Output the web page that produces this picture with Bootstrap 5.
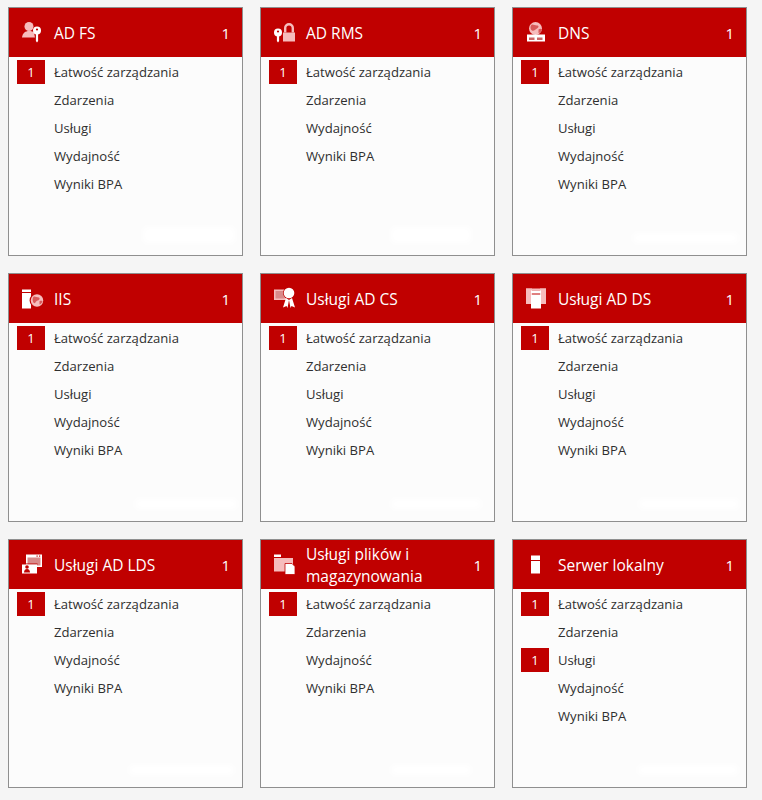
<!DOCTYPE html>
<html lang="pl">
<head>
<meta charset="utf-8">
<title>Pulpit nawigacyjny</title>
<link href="https://cdn.jsdelivr.net/npm/bootstrap@5.3.0/dist/css/bootstrap.min.css" rel="stylesheet">
<style>
html,body{background:#f5f5f5;}
body{font-family:"Open Sans","Noto Sans",sans-serif;color:#2f2f2f;margin:0;height:800px;overflow:hidden;}
.tile-grid{display:grid;grid-template-columns:repeat(3,235px);grid-auto-rows:249px;column-gap:17px;row-gap:17px;padding:7px 0 0 8px;}
.tile{background:#fcfcfc;border:1px solid #8f8f8f;position:relative;overflow:hidden;}
.tile-head{background:#c00000;color:#fff;height:49px;font-size:15.5px;line-height:22px;padding:0 12px 0 0;}
.tile-ico{width:45px;flex:none;display:flex;justify-content:center;padding-left:1px;}
.tile-ico svg{display:block;width:24px;height:24px;}
.tile-name{flex:1;min-width:0;}
.tile-num{font-size:15px;padding-left:8px;}
.tile-rows{padding-top:3px;}
.tile-row{height:28px;font-size:13.1px;line-height:24px;}
.tile-flag{width:28px;height:24px;margin-left:8px;margin-right:9px;flex:none;text-align:center;color:#fff;font-size:13px;}
.tile-flag.on{background:#c00000;}
.tile-glow{position:absolute;background:#fff;filter:blur(3px);height:16px;bottom:12px;}
</style>
</head>
<body>
<svg width="0" height="0" class="position-absolute">
<defs>
<symbol id="i-adfs" viewBox="0 0 24 24"><circle cx="9" cy="5.500" r="4.500" fill="#f6bcbc"/><path d="M2 16.500c.5-4.500 3.500-6.500 7-6.500 2.500 0 4 .5 5 1.500l1 5z" fill="#f6bcbc"/><circle cx="17" cy="9.500" r="4" fill="#fff"/><circle cx="17" cy="8.500" r="1.100" fill="#c00000"/><path d="M15.900 12.500h2.200v7.500l-1.100 1.500-1.100-1.500z" fill="#fff"/></symbol>
<symbol id="i-adrms" viewBox="0 0 24 24"><path d="M12 11.500V7a5 5 0 0 1 10 0v4.500h-2.400V7a2.600 2.600 0 0 0-5.200 0v4.500z" fill="#f6bcbc"/><rect x="11" y="11.500" width="12" height="9" fill="#f6bcbc"/><circle cx="6" cy="11.500" r="4.600" fill="#c00000"/><circle cx="6" cy="11.500" r="4" fill="#fff"/><circle cx="6" cy="10.500" r="1.100" fill="#c00000"/><path d="M4.900 14.500h2.200v5.500l-1.100 1.500-1.100-1.500z" fill="#fff"/></symbol>
<symbol id="i-dns" viewBox="0 0 24 24"><circle cx="11.500" cy="7.500" r="6.500" fill="#f6bcbc"/><path d="M8 3.500c2 0 3 1 5 1s2 2 0 3-3 3-5 2-2-5 0-6zM14.500 8.500c1-1 3-1 3.500 0-.5 2-2 3.500-3.500 3.500z" fill="#d85a5a"/><rect x="3" y="13.500" width="18" height="7" fill="#fff"/><rect x="5" y="16.500" width="5.500" height="2.500" fill="#c66"/><rect x="13" y="16.500" width="5.500" height="2.500" fill="#c66"/></symbol>
<symbol id="i-iis" viewBox="0 0 24 24"><rect x="2" y="2.500" width="9" height="2.500" fill="#fff"/><rect x="2" y="6" width="9" height="15.500" fill="#fff"/><circle cx="17" cy="13.500" r="7.400" fill="#c00000"/><circle cx="17" cy="13.500" r="6.200" fill="#f6bcbc"/><path d="M14 9.500c2 0 3 1 5 1 1.500 1 0 3-1.500 3s-2 3.500-3.500 2.500-2-5.500 0-6.500zM19.500 14c1-.5 2.500-.5 3 0-.5 2-2 3.500-3 3.500z" fill="#d85a5a"/></symbol>
<symbol id="i-cs" viewBox="0 0 24 24"><rect x="2" y="2.500" width="12" height="10.500" fill="#f6bcbc"/><rect x="3.500" y="4" width="9" height="7.500" fill="#d98a8a"/><circle cx="17" cy="6" r="6" fill="#c00000"/><circle cx="17" cy="6" r="5.300" fill="#fff"/><path d="M14 11l-3 9.500 3.500-1.500 1 2 1.500-8zM20 11l3 9.500-3.500-1.500-1 2-1.500-8z" fill="#fff"/></symbol>
<symbol id="i-ds" viewBox="0 0 24 24"><rect x="2" y="1.500" width="6" height="15.500" fill="#f6bcbc"/><rect x="16" y="1.500" width="6" height="15.500" fill="#f6bcbc"/><rect x="2" y="1.500" width="20" height="2" fill="#f6bcbc"/><rect x="7" y="3.500" width="10" height="3" fill="#fff"/><rect x="7" y="7.500" width="10" height="14" fill="#fff"/></symbol>
<symbol id="i-lds" viewBox="0 0 24 24"><rect x="6" y="1.500" width="16" height="12.500" fill="#fff"/><rect x="7.500" y="4.500" width="13" height="8" fill="#d98a8a"/><rect x="16.500" y="2.500" width="1.200" height="1.200" fill="#c00000"/><rect x="19" y="2.500" width="1.200" height="1.200" fill="#c00000"/><rect x="1.500" y="10.500" width="16" height="1" fill="#c00000"/><rect x="2" y="11.500" width="15" height="9" fill="#fff"/><circle cx="7" cy="14" r="1.800" fill="#c00000"/><path d="M4 19.500c0-2.500 1.500-3.500 3-3.500s3 1 3 3.500z" fill="#c00000"/></symbol>
<symbol id="i-files" viewBox="0 0 24 24"><rect x="2" y="1.500" width="7" height="2.500" fill="#fff"/><rect x="2" y="5" width="19" height="13.500" fill="#f6bcbc"/><path d="M13 10.500h7l3 3v8H13z" fill="#fff" stroke="#c00000" stroke-width=".8"/></symbol>
<symbol id="i-srv" viewBox="0 0 24 24"><rect x="7" y="2.500" width="9" height="4.500" fill="#fff"/><rect x="7" y="8" width="9" height="12.500" fill="#fff"/></symbol>
</defs>
</svg>

<main class="tile-grid">

<section class="tile d-flex flex-column">
<div class="tile-head d-flex align-items-center"><div class="tile-ico"><svg><use href="#i-adfs"/></svg></div><div class="tile-name">AD FS</div><div class="tile-num">1</div></div>
<div class="tile-rows">
<div class="tile-row d-flex"><span class="tile-flag on">1</span>Łatwość zarządzania</div>
<div class="tile-row d-flex"><span class="tile-flag"></span>Zdarzenia</div>
<div class="tile-row d-flex"><span class="tile-flag"></span>Usługi</div>
<div class="tile-row d-flex"><span class="tile-flag"></span>Wydajność</div>
<div class="tile-row d-flex"><span class="tile-flag"></span>Wyniki BPA</div>
</div>
<div class="tile-glow" style="left:134px;width:92px"></div>
</section>

<section class="tile d-flex flex-column">
<div class="tile-head d-flex align-items-center"><div class="tile-ico"><svg><use href="#i-adrms"/></svg></div><div class="tile-name">AD RMS</div><div class="tile-num">1</div></div>
<div class="tile-rows">
<div class="tile-row d-flex"><span class="tile-flag on">1</span>Łatwość zarządzania</div>
<div class="tile-row d-flex"><span class="tile-flag"></span>Zdarzenia</div>
<div class="tile-row d-flex"><span class="tile-flag"></span>Wydajność</div>
<div class="tile-row d-flex"><span class="tile-flag"></span>Wyniki BPA</div>
</div>
<div class="tile-glow" style="left:130px;width:80px"></div>
</section>

<section class="tile d-flex flex-column">
<div class="tile-head d-flex align-items-center"><div class="tile-ico"><svg><use href="#i-dns"/></svg></div><div class="tile-name">DNS</div><div class="tile-num">1</div></div>
<div class="tile-rows">
<div class="tile-row d-flex"><span class="tile-flag on">1</span>Łatwość zarządzania</div>
<div class="tile-row d-flex"><span class="tile-flag"></span>Zdarzenia</div>
<div class="tile-row d-flex"><span class="tile-flag"></span>Usługi</div>
<div class="tile-row d-flex"><span class="tile-flag"></span>Wydajność</div>
<div class="tile-row d-flex"><span class="tile-flag"></span>Wyniki BPA</div>
</div>
<div class="tile-glow" style="left:120px;width:105px;height:10px"></div>
</section>

<section class="tile d-flex flex-column">
<div class="tile-head d-flex align-items-center"><div class="tile-ico"><svg><use href="#i-iis"/></svg></div><div class="tile-name">IIS</div><div class="tile-num">1</div></div>
<div class="tile-rows">
<div class="tile-row d-flex"><span class="tile-flag on">1</span>Łatwość zarządzania</div>
<div class="tile-row d-flex"><span class="tile-flag"></span>Zdarzenia</div>
<div class="tile-row d-flex"><span class="tile-flag"></span>Usługi</div>
<div class="tile-row d-flex"><span class="tile-flag"></span>Wydajność</div>
<div class="tile-row d-flex"><span class="tile-flag"></span>Wyniki BPA</div>
</div>
<div class="tile-glow" style="left:126px;width:102px;height:10px"></div>
</section>

<section class="tile d-flex flex-column">
<div class="tile-head d-flex align-items-center"><div class="tile-ico"><svg><use href="#i-cs"/></svg></div><div class="tile-name">Usługi AD CS</div><div class="tile-num">1</div></div>
<div class="tile-rows">
<div class="tile-row d-flex"><span class="tile-flag on">1</span>Łatwość zarządzania</div>
<div class="tile-row d-flex"><span class="tile-flag"></span>Zdarzenia</div>
<div class="tile-row d-flex"><span class="tile-flag"></span>Usługi</div>
<div class="tile-row d-flex"><span class="tile-flag"></span>Wydajność</div>
<div class="tile-row d-flex"><span class="tile-flag"></span>Wyniki BPA</div>
</div>
<div class="tile-glow" style="left:130px;width:90px;height:10px"></div>
</section>

<section class="tile d-flex flex-column">
<div class="tile-head d-flex align-items-center"><div class="tile-ico"><svg><use href="#i-ds"/></svg></div><div class="tile-name">Usługi AD DS</div><div class="tile-num">1</div></div>
<div class="tile-rows">
<div class="tile-row d-flex"><span class="tile-flag on">1</span>Łatwość zarządzania</div>
<div class="tile-row d-flex"><span class="tile-flag"></span>Zdarzenia</div>
<div class="tile-row d-flex"><span class="tile-flag"></span>Usługi</div>
<div class="tile-row d-flex"><span class="tile-flag"></span>Wydajność</div>
<div class="tile-row d-flex"><span class="tile-flag"></span>Wyniki BPA</div>
</div>
<div class="tile-glow" style="left:126px;width:100px;height:10px"></div>
</section>

<section class="tile d-flex flex-column">
<div class="tile-head d-flex align-items-center"><div class="tile-ico"><svg><use href="#i-lds"/></svg></div><div class="tile-name">Usługi AD LDS</div><div class="tile-num">1</div></div>
<div class="tile-rows">
<div class="tile-row d-flex"><span class="tile-flag on">1</span>Łatwość zarządzania</div>
<div class="tile-row d-flex"><span class="tile-flag"></span>Zdarzenia</div>
<div class="tile-row d-flex"><span class="tile-flag"></span>Wydajność</div>
<div class="tile-row d-flex"><span class="tile-flag"></span>Wyniki BPA</div>
</div>
<div class="tile-glow" style="left:120px;width:105px;height:10px"></div>
</section>

<section class="tile d-flex flex-column">
<div class="tile-head d-flex align-items-center"><div class="tile-ico"><svg><use href="#i-files"/></svg></div><div class="tile-name">Usługi plików i magazynowania</div><div class="tile-num">1</div></div>
<div class="tile-rows">
<div class="tile-row d-flex"><span class="tile-flag on">1</span>Łatwość zarządzania</div>
<div class="tile-row d-flex"><span class="tile-flag"></span>Zdarzenia</div>
<div class="tile-row d-flex"><span class="tile-flag"></span>Wydajność</div>
<div class="tile-row d-flex"><span class="tile-flag"></span>Wyniki BPA</div>
</div>
<div class="tile-glow" style="left:130px;width:80px;height:10px"></div>
</section>

<section class="tile d-flex flex-column">
<div class="tile-head d-flex align-items-center"><div class="tile-ico"><svg><use href="#i-srv"/></svg></div><div class="tile-name">Serwer lokalny</div><div class="tile-num">1</div></div>
<div class="tile-rows">
<div class="tile-row d-flex"><span class="tile-flag on">1</span>Łatwość zarządzania</div>
<div class="tile-row d-flex"><span class="tile-flag"></span>Zdarzenia</div>
<div class="tile-row d-flex"><span class="tile-flag on">1</span>Usługi</div>
<div class="tile-row d-flex"><span class="tile-flag"></span>Wydajność</div>
<div class="tile-row d-flex"><span class="tile-flag"></span>Wyniki BPA</div>
</div>
<div class="tile-glow" style="left:125px;width:100px;height:10px"></div>
</section>

</main>
<script src="https://cdn.jsdelivr.net/npm/bootstrap@5.3.0/dist/js/bootstrap.bundle.min.js"></script>
</body>
</html>
